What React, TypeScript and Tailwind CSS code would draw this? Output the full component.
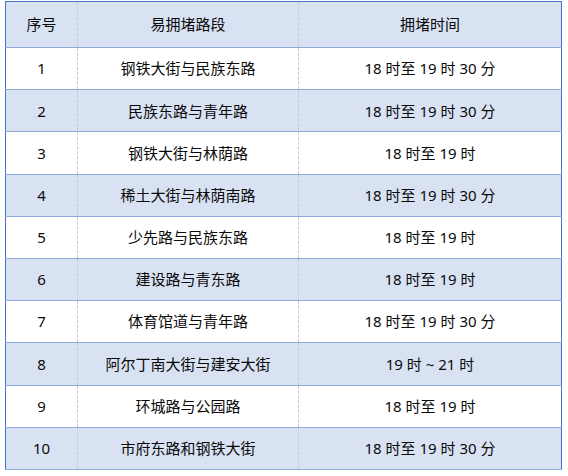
const rows: [string, string, string][] = [
  ["1", "钢铁大街与民族东路", "18 时至 19 时 30 分"],
  ["2", "民族东路与青年路", "18 时至 19 时 30 分"],
  ["3", "钢铁大街与林荫路", "18 时至 19 时"],
  ["4", "稀土大街与林荫南路", "18 时至 19 时 30 分"],
  ["5", "少先路与民族东路", "18 时至 19 时"],
  ["6", "建设路与青东路", "18 时至 19 时"],
  ["7", "体育馆道与青年路", "18 时至 19 时 30 分"],
  ["8", "阿尔丁南大街与建安大街", "19 时 ~ 21 时"],
  ["9", "环城路与公园路", "18 时至 19 时"],
  ["10", "市府东路和钢铁大街", "18 时至 19 时 30 分"],
];

export default function App() {
  return (
    <div className="w-[568px] h-[476px] bg-white pt-px pl-[5px]">
      <table
        className="w-[557px] border-collapse border border-[#4472c4] text-[15px] text-[#0a0a0a] table-fixed"
        style={{ fontFamily: '"Noto Sans", "Noto Sans CJK SC", sans-serif' }}
      >
        <colgroup>
          <col className="w-[72px]" />
          <col className="w-[221px]" />
          <col />
        </colgroup>
        <thead>
          <tr className="h-[46px] bg-[#d9e2f3] border-b border-[#8eaadb]">
            <th className="font-normal text-center border-r border-dashed border-r-[#c8c8c8]">序号</th>
            <th className="font-normal text-center border-r border-dashed border-r-[#c8c8c8]">易拥堵路段</th>
            <th className="font-normal text-center">拥堵时间</th>
          </tr>
        </thead>
        <tbody>
          {rows.map(([n, road, time], i) => (
            <tr
              key={n}
              className={`h-[42.2px] border-b border-[#8eaadb] ${i % 2 === 1 ? "bg-[#d9e2f3]" : "bg-white"}`}
            >
              <td className="text-center border-r border-dashed border-r-[#c8c8c8]">{n}</td>
              <td className="text-center border-r border-dashed border-r-[#c8c8c8]">{road}</td>
              <td className="text-center">{time}</td>
            </tr>
          ))}
        </tbody>
      </table>
    </div>
  );
}
